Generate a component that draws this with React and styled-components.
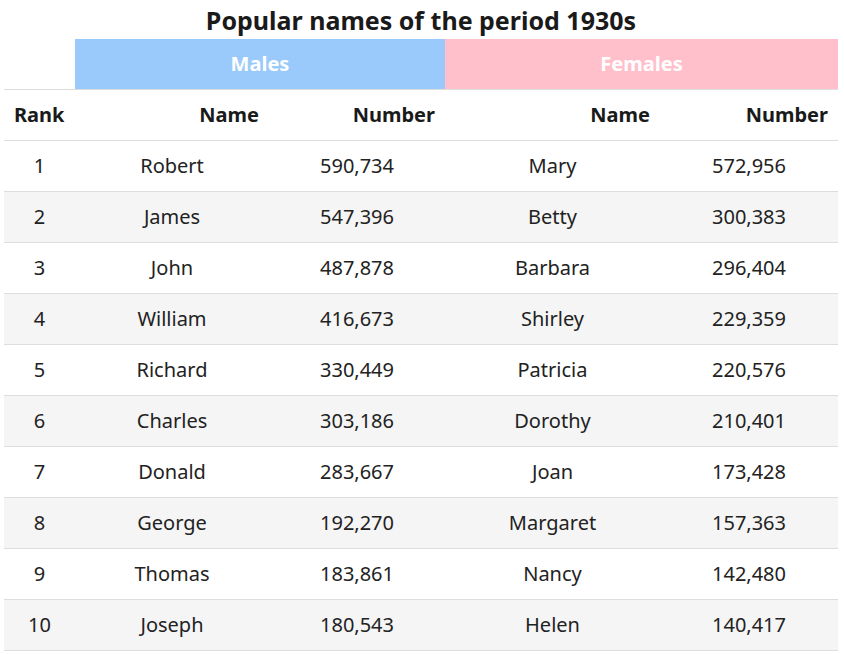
import styled, { createGlobalStyle } from "styled-components";

const Global = createGlobalStyle`
	body {
		margin: 0;
		background: #fff;
		font-family: "Noto Sans", "Open Sans", sans-serif;
		color: #222;
	}
`;

const Page = styled.div`
	width: 834px;
	padding: 0 6px 0 4px;
`;

const Title = styled.h1`
	margin: 0;
	height: 39px;
	line-height: 41px;
	font-size: 25px;
	font-weight: 700;
	text-align: center;
	color: #1a1a1a;
`;

const Table = styled.table`
	width: 834px;
	border-collapse: collapse;
	table-layout: fixed;
`;

const GroupCell = styled.th`
	height: 48px;
	padding: 0 0 2px;
	font-size: 20px;
	font-weight: 700;
	color: #fff;
	text-align: center;
	background: ${(p) => p.$bg || "transparent"};
`;

const HeadCell = styled.th`
	height: 48px;
	padding: 0 10px 2px;
	font-size: 20px;
	font-weight: 700;
	color: #1a1a1a;
	text-align: ${(p) => p.$align || "right"};
	border-top: 1px solid #ddd;
	border-bottom: 1px solid #ddd;
`;

const Row = styled.tr`
	background: ${(p) => (p.$alt ? "#f5f5f5" : "#fff")};
	border-bottom: 1px solid #ddd;
`;

const Cell = styled.td`
	height: 48px;
	padding: 0 0 2px;
	font-size: 20px;
	text-align: center;
	color: #222;
`;

const rows = [
	[1, "Robert", "590,734", "Mary", "572,956"],
	[2, "James", "547,396", "Betty", "300,383"],
	[3, "John", "487,878", "Barbara", "296,404"],
	[4, "William", "416,673", "Shirley", "229,359"],
	[5, "Richard", "330,449", "Patricia", "220,576"],
	[6, "Charles", "303,186", "Dorothy", "210,401"],
	[7, "Donald", "283,667", "Joan", "173,428"],
	[8, "George", "192,270", "Margaret", "157,363"],
	[9, "Thomas", "183,861", "Nancy", "142,480"],
	[10, "Joseph", "180,543", "Helen", "140,417"],
];

export default function App() {
	return (
		<>
			<Global />
			<Page>
				<Title>Popular names of the period 1930s</Title>
				<Table>
					<colgroup>
						<col style={{ width: 71 }} />
						<col style={{ width: 194 }} />
						<col style={{ width: 176 }} />
						<col style={{ width: 215 }} />
						<col style={{ width: 178 }} />
					</colgroup>
					<thead>
						<tr>
							<GroupCell />
							<GroupCell colSpan={2} $bg="#99cafb">Males</GroupCell>
							<GroupCell colSpan={2} $bg="#ffc0cb">Females</GroupCell>
						</tr>
						<tr>
							<HeadCell $align="left">Rank</HeadCell>
							<HeadCell>Name</HeadCell>
							<HeadCell>Number</HeadCell>
							<HeadCell>Name</HeadCell>
							<HeadCell>Number</HeadCell>
						</tr>
					</thead>
					<tbody>
						{rows.map((r, i) => (
							<Row key={r[0]} $alt={i % 2 === 1}>
								{r.map((v, j) => (
									<Cell key={j}>{v}</Cell>
								))}
							</Row>
						))}
					</tbody>
				</Table>
			</Page>
		</>
	);
}
